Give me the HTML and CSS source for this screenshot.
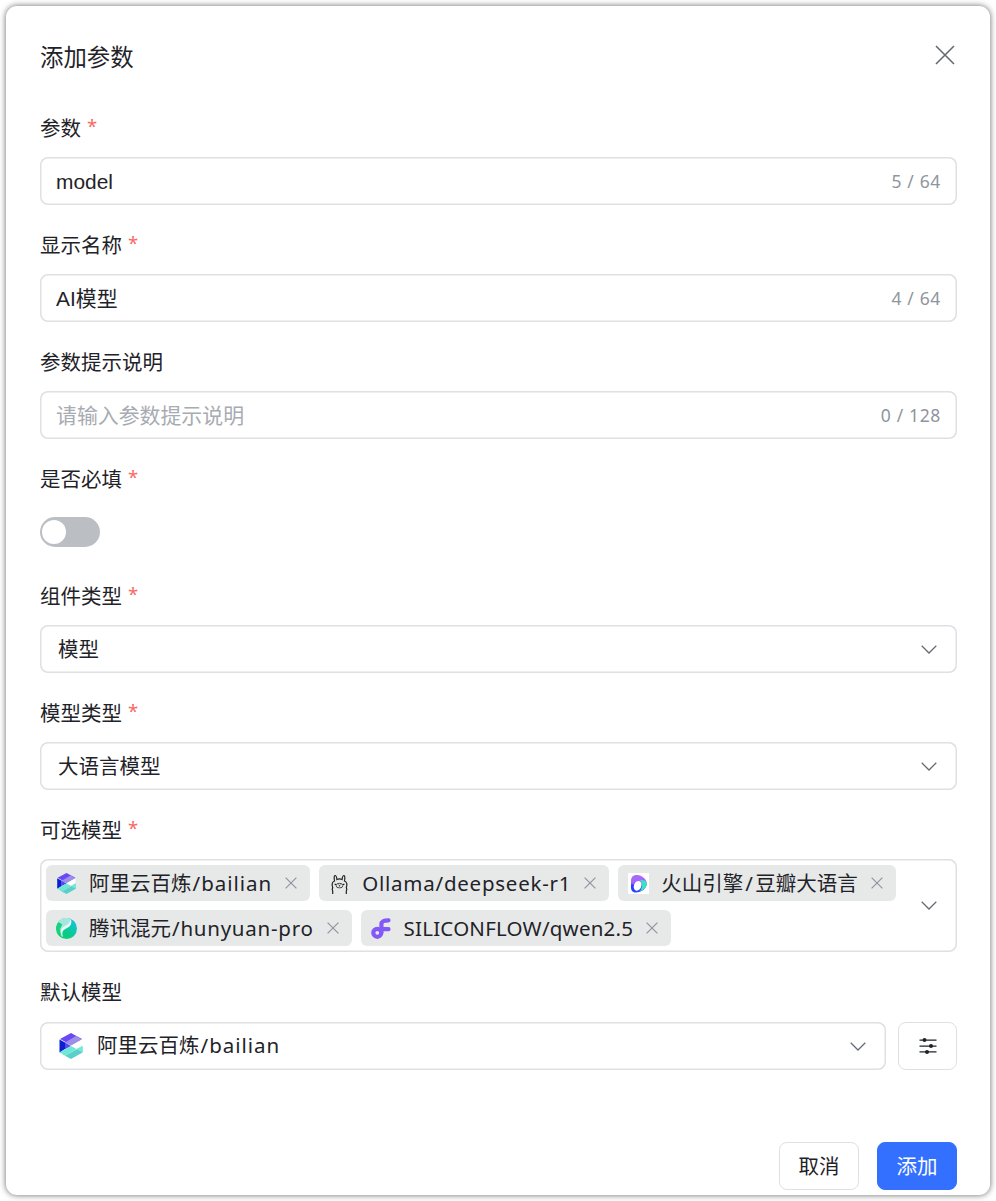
FILE: index.html
```html
<!DOCTYPE html>
<html lang="zh-CN">
<head>
  <meta charset="UTF-8" />
  <meta name="viewport" content="width=device-width, initial-scale=1.0"/>
  <title>添加参数</title>
  <link rel="stylesheet" href="styles.css">
</head>
<body>
  <!-- shared icons -->
  <svg class="sprite" width="0" height="0">
    <symbol id="close" viewBox="0 0 20 20">
      <path d="M1 1L19 19M19 1L1 19" fill="none" stroke="currentColor" vector-effect="non-scaling-stroke"/>
    </symbol>
    <symbol id="arrow" viewBox="0 0 16 9">
      <path d="M.7.7L8 8L15.3.7" fill="none" stroke="currentColor" stroke-width="1.25"/>
    </symbol>
    <symbol id="bailian" viewBox="0 0 24 26">
      <path d="M12 0L23 6L12 12L1 6Z" fill="#6b48f5"/>
      <path d="M17 3L23 6.500L12 12.500L6 9.500Z" fill="#9d8eea"/>
      <path d="M.5 6.500L6 9.500V16L.5 19.500Z" fill="#0b1fd2"/>
      <path d="M6 9.500L12 13L6 16.200Z" fill="#5648ee"/>
      <path d="M12 13L23 6.500V13L17.500 16Z" fill="#fff"/>
      <path d="M.5 19.500L12 13L17.500 16L6 22.800Z" fill="#6ce8d5"/>
      <path d="M6 22.800L23.500 13V19.500L12 26Z" fill="#5bcfc9"/>
      <path d="M17.500 16L23.500 13V19.500Z" fill="#73ead8"/>
    </symbol>
  </svg>

  <div class="modal">
    <div class="modal-header">
      <h1>添加参数</h1>
      <button class="modal-close"><svg width="20" height="20"><use href="#close"/></svg></button>
    </div>

    <form class="form">
      <div class="field">
        <div class="label">参数<i>*</i></div>
        <div class="input"><span class="value">model</span><span class="count">5 / 64</span></div>
      </div>
      <div class="field">
        <div class="label">显示名称<i>*</i></div>
        <div class="input"><span class="value">AI模型</span><span class="count">4 / 64</span></div>
      </div>
      <div class="field">
        <div class="label">参数提示说明</div>
        <div class="input"><span class="placeholder">请输入参数提示说明</span><span class="count">0 / 128</span></div>
      </div>
      <div class="field">
        <div class="label">是否必填<i>*</i></div>
        <div class="switch-row"><div class="switch"></div></div>
      </div>
      <div class="field">
        <div class="label">组件类型<i>*</i></div>
        <div class="input select"><span>模型</span><svg class="arrow" width="16" height="9"><use href="#arrow"/></svg></div>
      </div>
      <div class="field">
        <div class="label">模型类型<i>*</i></div>
        <div class="input select"><span>大语言模型</span><svg class="arrow" width="16" height="9"><use href="#arrow"/></svg></div>
      </div>

      <div class="field">
        <div class="label">可选模型<i>*</i></div>
        <div class="input multi">
          <div class="tags">
            <div class="tag">
              <svg class="logo" width="21" height="21"><use href="#bailian"/></svg>
              <span class="name mixed">阿里云百炼<b class="latin">/bailian</b></span>
              <svg class="remove"><use href="#close"/></svg>
            </div>
            <div class="tag">
              <svg class="logo" width="21" height="21" viewBox="0 0 21 21" fill="none" stroke="#222" stroke-width="1.200">
                <path d="M3.700 21V18L3.200 16.500L3.700 14.500C2.700 12 2.800 9 5.500 8C5 5 5 2.500 6 2.500C7.300 2.500 7.700 4.500 7.900 6.500C9.600 5.700 11.400 5.700 13.100 6.500C13.300 4.500 13.700 2.500 15 2.500C16 2.500 16 5 15.500 8C18.200 9 18.300 12 17.300 14.500L17.800 16.500L17.300 18V21"/>
                <ellipse cx="10.500" cy="12.600" rx="3.400" ry="2.300" stroke-width=".8"/>
                <path d="M9.500 11.800L10.500 12.500L11.500 11.800M10.500 12.500V13.500" stroke-width=".9"/>
                <path d="M5.600 11.300H7M14 11.300H15.400" stroke-width="1.300"/>
              </svg>
              <span class="name latin">Ollama/deepseek-r1</span>
              <svg class="remove"><use href="#close"/></svg>
            </div>
            <div class="tag">
              <svg class="logo" width="21" height="21" viewBox="0 0 21 21">
                <defs>
                  <linearGradient id="doubao" x1="0" y1="0" x2="0" y2="1">
                    <stop offset="0" stop-color="#aa68fa"/><stop offset=".45" stop-color="#a267ff"/><stop offset=".6" stop-color="#263cff"/><stop offset="1" stop-color="#2448ff"/>
                  </linearGradient>
                </defs>
                <path d="M0 0H21V21H0Z" fill="#fff"/>
                <path d="M3 8C3 4 5 2 9 2C14 2 18.800 6.500 18.800 10.500C18.800 15.500 13 19.500 8 19.500C4 19.500 2.700 17 3 13Z" fill="url(#doubao)"/>
                <path d="M12 7C17 6.500 18.800 9 18.800 11C18.800 14 16 17 12 18.300C14.500 14 14.500 10 12 7Z" fill="#3ce1c0"/>
                <ellipse cx="9.600" cy="12.800" rx="3.700" ry="5" transform="rotate(22 9.600 12.800)" fill="#fff"/>
              </svg>
              <span class="name mixed">火山引擎<b class="latin slash">/</b>豆瓣大语言</span>
              <svg class="remove"><use href="#close"/></svg>
            </div>
            <div class="tag">
              <svg class="logo" width="21" height="21" viewBox="0 0 21 21">
                <defs>
                  <linearGradient id="hunyuan" x1="1" y1="0" x2="0" y2="1">
                    <stop offset="0" stop-color="#12c2f0"/><stop offset=".6" stop-color="#0acb88"/><stop offset="1" stop-color="#12cf60"/>
                  </linearGradient>
                </defs>
                <circle cx="10.500" cy="10.500" r="10.500" fill="url(#hunyuan)"/>
                <path d="M2 4.500C5 0 9 -.5 13 .3C16 3 16 8 11 10C7 11.500 5.500 14 7 19C3 17 2 13 4 10C7 8 5 4 2 4.500Z" fill="#a5e6df"/>
                <path d="M14 .6C17 4 15 8.500 10 10.500C6 12 5 15 7 19C3 14 5 9.500 9 8C13 6.500 14.500 4 14 .6Z" fill="#e9fbf7"/>
                <path d="M.1 10C0 6 4.500 4 6.300 6.500C4.500 8.500 3 12 5.500 17.800C2 16 .2 13 .1 10Z" fill="#17d47f"/>
              </svg>
              <span class="name mixed long">腾讯混元<b class="latin">/hunyuan-pro</b></span>
              <svg class="remove"><use href="#close"/></svg>
            </div>
            <div class="tag">
              <svg class="logo" width="21" height="21" viewBox="0 0 21 21" fill="none" stroke="#8358f6" stroke-width="4.200" stroke-linecap="round">
                <circle cx="6.300" cy="14.800" r="4"/>
                <path d="M10.400 14.500V6.500C10.400 3.500 12.500 2.300 17.500 2.300M10.500 11.200H17.500"/>
              </svg>
              <span class="name latin caps">SILICONFLOW/qwen2.5</span>
              <svg class="remove"><use href="#close"/></svg>
            </div>
          </div>
          <svg class="arrow" width="16" height="9"><use href="#arrow"/></svg>
        </div>
      </div>

      <div class="field">
        <div class="label">默认模型</div>
        <div class="default-row">
          <div class="input select">
            <svg class="logo-lg" width="26" height="26"><use href="#bailian"/></svg>
            <span class="mixed">阿里云百炼<b class="latin">/bailian</b></span>
            <svg class="arrow" width="16" height="9"><use href="#arrow"/></svg>
          </div>
          <button type="button" class="settings">
            <svg width="18" height="18" viewBox="0 0 18 18" fill="#1f2329">
              <path d="M.5 2.500H17.500V3.800H.5ZM.5 8.400H17.500V9.700H.5ZM.5 14.300H17.500V15.600H.5Z"/>
              <circle cx="5.500" cy="3.100" r="2"/><circle cx="12" cy="9" r="2"/><circle cx="8" cy="14.900" r="2"/>
            </svg>
          </button>
        </div>
      </div>
    </form>

    <div class="modal-footer">
      <button class="btn">取消</button>
      <button class="btn primary">添加</button>
    </div>
  </div>
</body>
</html>
```
FILE: styles.css
```css
* {
  box-sizing: border-box;
}
body {
  margin: 0;
  padding: 6px;
  background: #fff;
  font-family: "Noto Sans CJK SC", sans-serif;
  font-size: 20.5px;
  line-height: 30px;
  color: #1f2329;
}
.sprite {
  display: block;
}
button {
  font: inherit;
  color: inherit;
  background: #fff;
  padding: 0;
  cursor: pointer;
}
.modal {
  width: 984px;
  height: 1189px;
  padding: 34px 33px 0 34px;
  background: #fff;
  border-radius: 11px;
  box-shadow: 0 0 6px rgba(0,0,0,0.6);
  display: flex;
  flex-direction: column;
}
.modal-header {
  display: flex;
  justify-content: space-between;
  height: 69px;
}
h1 {
  margin: 0;
  font-size: 23.4px;
  font-weight: 400;
  line-height: 33px;
}
.modal-close {
  border: none;
  height: 20px;
  margin: 5px 2px 0 0;
  color: #646a73;
}
.modal-close svg {
  display: block;
  stroke-width: 1.6px;
}
.field {
  margin-bottom: 21px;
}
.label {
  display: flex;
  height: 40px;
  line-height: 37px;
  margin-bottom: 8px;
}
.label i {
  font-family: "Noto Sans", sans-serif;
  font-style: normal;
  font-size: 18.5px;
  line-height: 33px;
  color: #f76965;
  margin-left: 6px;
}
.input {
  display: flex;
  align-items: center;
  height: 48px;
  padding: 0 16px;
  box-shadow: inset 0 0 0 1.5px #dee0e3;
  border-radius: 8px;
}
.value {
  font-family: "Liberation Sans", "Noto Sans CJK SC", sans-serif;
  font-size: 20.9px;
  padding-top: 2px;
}
.placeholder {
  font-size: 20.9px;
  padding-bottom: 2px;
  color: #a8abb2;
}
.count {
  margin-left: auto;
  font-family: "Noto Sans", sans-serif;
  font-size: 17.5px;
  letter-spacing: 0.65px;
  color: #8f959e;
}
.switch-row {
  display: flex;
  align-items: center;
  height: 48px;
}
.switch {
  width: 60px;
  height: 30px;
  padding: 3px 2px;
  border-radius: 15px;
  background: #bbbfc4;
}
.switch::before {
  content: "";
  display: block;
  width: 24px;
  height: 24px;
  border-radius: 50%;
  background: #fff;
}
.select {
  padding: 0 20.5px 0 18px;
}
.select span {
  padding-bottom: 2px;
}
.arrow {
  flex: none;
  margin-left: auto;
  color: #646a73;
}
.multi {
  height: 93px;
  padding: 0 20.5px 0 6px;
}
.tags {
  display: flex;
  flex-wrap: wrap;
  gap: 9px;
  width: 862px;
  margin-right: -20px;
}
.tag {
  display: flex;
  align-items: center;
  height: 36px;
  padding: 0 13px 0 10px;
  border-radius: 6px;
  background: #e7e9e8;
}
.name {
  margin: 0 13px 0 12px;
  white-space: nowrap;
}
.latin {
  font-family: "Noto Sans", sans-serif;
  font-weight: 400;
  letter-spacing: 0.75px;
}
.caps {
  letter-spacing: 0.22px;
}
.mixed {
  padding-bottom: 2px;
}
.mixed .latin {
  margin-left: 1px;
  letter-spacing: 1px;
}
.long .latin {
  letter-spacing: 0.75px;
}
.mixed .slash {
  margin: 0 1.5px 0 2px;
}
.remove {
  width: 12px;
  height: 12px;
  color: #8f959e;
  stroke-width: 1.2px;
}
.default-row {
  display: flex;
  gap: 12px;
  padding-top: 1px;
}
.default-row .input {
  flex: 1;
}
.default-row .mixed {
  padding-bottom: 3px;
}
.logo-lg {
  margin-right: 13px;
}
.settings {
  display: flex;
  align-items: center;
  justify-content: center;
  width: 59px;
  height: 48px;
  border: 1px solid #dee0e3;
  border-radius: 8px;
}
.modal-footer {
  display: flex;
  justify-content: flex-end;
  gap: 18px;
  margin-top: 51px;
}
.btn {
  width: 80px;
  height: 48px;
  padding-bottom: 2px;
  border: 1px solid #dee0e3;
  border-radius: 8px;
}
.primary {
  background: #3370ff;
  border-color: #3370ff;
  color: #fff;
}
```
